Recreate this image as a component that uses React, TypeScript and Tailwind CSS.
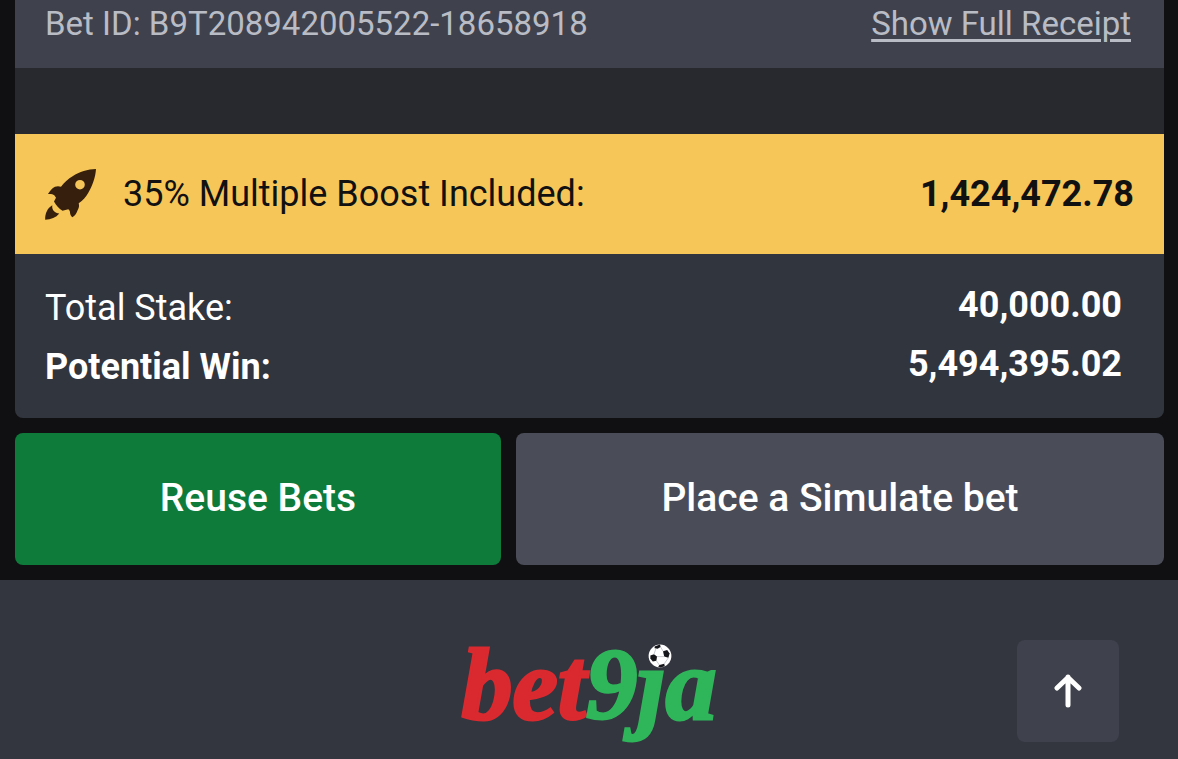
type TotalRowProps = {
  label: string;
  amount: string;
  strong?: boolean;
};

function TotalRow({ label, amount, strong = false }: TotalRowProps) {
  return (
    <div className="flex items-start justify-between">
      <dt className={strong ? 'pt-[3px] font-bold' : 'pt-[3px]'}>{label}</dt>
      <dd className="font-bold">{amount}</dd>
    </div>
  );
}

function RocketIcon() {
  return (
    <svg viewBox="0 0 52 52" className="size-13 shrink-0" fill="#361f0c" aria-hidden="true">
      <path
        fillRule="evenodd"
        d="M51 1C43 1 34 4 28 8C23 11 19 14.500 16 18.700C14 18 12 18 10 18.700C7 20 5 23 3 26C5.500 25.800 8 26 9.300 27.300L11 29.700L9 33.500C11 37 14 41 17.500 42.700L23.300 41.300C24.500 42.500 25 43 25 44.700C25.200 46.500 26 48 27.300 49.300C30 47.500 31.500 45.500 32.300 43C34 40 34.500 38 33.700 35.300C38 32 41 29 43.300 24.700C47.500 18 50.500 9 51 1ZM35 11.900A4.800 4.800 0 1 1 34.990 21.500A4.800 4.800 0 1 1 35 11.900Z"
      />
      <path d="M7.300 37.300C2.500 40 0 45.500 .2 51.700C6 51.500 11 49.500 14.300 45.500C10 45.500 6.500 42 7.300 37.300Z" />
    </svg>
  );
}

function Football() {
  return (
    <svg viewBox="0 0 20 20" className="absolute top-1 right-11 size-6" aria-hidden="true">
      <circle cx="10" cy="10" r="9.500" fill="#fff" />
      <g fill="#15161a">
        <path d="M2 9.500L5 8.500L7.500 10.500L7 14L4 14.500L2 12Z" />
        <path d="M12.500 6L16 5L18 8L17 11.500L13.500 10.500Z" />
        <path d="M5.500 2L10 .5L10.500 2.500L8 4L5.500 3.500Z" />
        <path d="M9.500 17.500L13.500 16.500L14 18.500L10.500 19.500L8.500 19Z" />
      </g>
      <path
        d="M7.500 10.500L13.500 10.500M5 8.500L6.500 4M10.500 2.500L12.500 6M7 14L9.500 17.500M17 11.500L13.500 16.500"
        stroke="#b4b6bc"
        strokeWidth="0.600"
        fill="none"
      />
    </svg>
  );
}

function Logo() {
  return (
    <div className="relative font-['Liberation_Serif',serif] text-[102px] leading-[90px] font-bold italic">
      <span className="text-[#da2a2f] [-webkit-text-stroke:3px_#da2a2f]">bet</span>
      <span className="text-[#2fb65a] [-webkit-text-stroke:3px_#2fb65a]">9ja</span>
      <Football />
    </div>
  );
}

export default function App() {
  return (
    <div className="flex min-h-screen flex-col bg-[#101012] font-[Roboto,sans-serif] text-[36px] leading-[48px] text-white">
      <main className="pr-[14px] pb-[15px] pl-[15px]">
        <section className="overflow-hidden rounded-b-lg bg-[#31353d]">
          <header className="flex justify-between bg-[#3f424c] pr-[33px] pb-5 pl-[30px] text-[33px] text-[#b9bcc5]">
            <p>Bet ID: B9T208942005522-18658918</p>
            <a href="#receipt" className="underline decoration-3 underline-offset-4">
              Show Full Receipt
            </a>
          </header>
          <div className="h-[66px] bg-[#28292e]" />
          <div className="flex h-[120px] items-center bg-[#f6c659] px-[30px] text-[#111111]">
            <RocketIcon />
            <p className="ml-[26px]">35% Multiple Boost Included:</p>
            <strong className="ml-auto font-bold">1,424,472.78</strong>
          </div>
          <dl className="space-y-2 py-[27px] pr-[42px] pl-[30px]">
            <TotalRow label="Total Stake:" amount="40,000.00" />
            <TotalRow label="Potential Win:" amount="5,494,395.02" strong />
          </dl>
        </section>
        <div className="mt-[15px] grid grid-cols-[3fr_4fr] gap-[15px] text-[39px] font-medium">
          <button type="button" className="h-[132px] rounded-lg bg-[#0e7b3b] pb-0.5">
            Reuse Bets
          </button>
          <button type="button" className="rounded-lg bg-[#4a4d58] pb-0.5">
            Place a Simulate bet
          </button>
        </div>
      </main>
      <footer className="grid grow grid-cols-[1fr_auto_1fr] items-start bg-[#33353f] px-[59px] pt-[60px]">
        <div className="col-start-2">
          <Logo />
        </div>
        <button
          type="button"
          aria-label="Back to top"
          className="flex size-[102px] items-center justify-center justify-self-end rounded-lg bg-[#3f424c]"
        >
          <svg viewBox="0 0 28 34" className="h-[34px] w-7" aria-hidden="true">
            <path
              d="M14 31V3M3 14L14 3.500L25 14"
              fill="none"
              stroke="#fff"
              strokeWidth="5"
              strokeLinecap="round"
              strokeLinejoin="round"
            />
          </svg>
        </button>
      </footer>
    </div>
  );
}
